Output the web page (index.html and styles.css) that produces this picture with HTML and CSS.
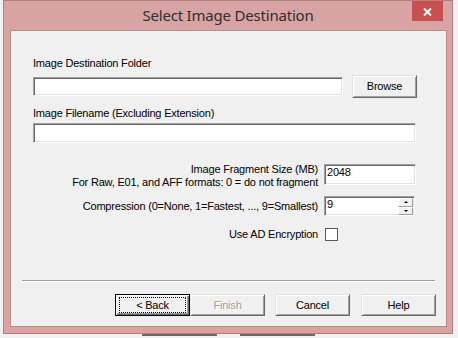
FILE: index.html
```html
<!DOCTYPE html>
<html>
<head>
<meta charset="utf-8">
<link rel="stylesheet" href="styles.css">
</head>
<body>
<div class="window">
  <div class="titlebar">
    <div class="title">Select Image Destination</div>
    <div class="close"><svg width="9" height="8" viewBox="0 0 9 8"><path d="M1 0.5 L8 7.5 M8 0.5 L1 7.5" stroke="#fff" stroke-width="2" fill="none"/></svg></div>
  </div>
  <div class="client">
    <div class="label l1">Image Destination Folder</div>
    <div class="row-folder">
      <div class="edit folder"></div>
      <div class="btn browse">Browse</div>
    </div>
    <div class="label l2">Image Filename (Excluding Extension)</div>
    <div class="edit filename"></div>
    <div class="opts">
      <div class="olabel frag">Image Fragment Size (MB)<br>For Raw, E01, and AFF formats: 0 = do not fragment</div>
      <div class="edit frag-edit">2048</div>
      <div class="olabel comp">Compression (0=None, 1=Fastest, ..., 9=Smallest)</div>
      <div class="edit spin"><span class="spinval">9</span><div class="spinbtns"><div class="sb up"><i></i></div><div class="sb down"><i></i></div></div></div>
      <div class="olabel enc">Use AD Encryption</div>
      <div class="checkcell"><div class="check"></div></div>
    </div>
    <div class="sep"></div>
    <div class="buttons">
      <div class="btn default"><span class="focus">&lt; Back</span></div>
      <div class="btn disabled">Finish</div>
      <div class="btn cancel">Cancel</div>
      <div class="btn help">Help</div>
    </div>
  </div>
</div>
<div class="under">
  <div class="seg s1"></div>
  <div class="seg s2"></div>
</div>
</body>
</html>
```
FILE: styles.css
```css
html, body {
  margin: 0;
  padding: 0;
}
body {
  background: #f0f0f0;
  width: 458px;
  height: 338px;
  overflow: hidden;
}
.window {
  box-sizing: border-box;
  margin-left: 3px;
  width: 450px;
  height: 334px;
  border: 1px solid #b07f7e;
  background: #d8a4a3;
  padding: 0 5px 6px 6px;
}
.titlebar {
  position: relative;
  height: 29px;
  box-sizing: border-box;
  padding-top: 4px;
}
.title {
  font-family: "Noto Sans", "Open Sans", sans-serif;
  font-size: 15px;
  line-height: 20px;
  letter-spacing: -0.2px;
  color: #2e2e2e;
  text-align: center;
  margin-left: -1px;
}
.close {
  position: absolute;
  top: 0;
  right: 4px;
  width: 31px;
  height: 20px;
  background: #c75050;
  display: flex;
  align-items: center;
  justify-content: center;
}
.close svg { display: block; margin-top: 1px; }
.client {
  box-sizing: border-box;
  width: 437px;
  height: 297px;
  border: 1px solid #bd8d8c;
  background: #f0f0f0;
  padding: 26px 0 0 22px;
  font-family: "Liberation Sans", Arial, sans-serif;
  font-size: 11px;
  line-height: 13px;
  letter-spacing: -0.2px;
  color: #000;
}
.label { height: 13px; white-space: nowrap; }
.l2 { margin-top: 9px; }
.row-folder {
  display: flex;
  margin-top: 5px;
  height: 23px;
}
.edit {
  box-sizing: border-box;
  background: #fff;
  border-top: 1px solid #a0a0a0;
  border-left: 1px solid #a0a0a0;
  border-bottom: 1px solid #fff;
  border-right: 1px solid #fff;
  box-shadow: inset 1px 1px 0 #696969, inset -1px -1px 0 #e3e3e3;
}
.folder {
  margin-top: 2px;
  width: 310px;
  height: 19px;
}
.btn {
  box-sizing: border-box;
  background: #f0f0f0;
  border: 1px solid;
  border-color: #e3e3e3 #696969 #696969 #e3e3e3;
  box-shadow: inset 1px 1px 0 #fff, inset -1px -1px 0 #a0a0a0;
  display: flex;
  align-items: center;
  justify-content: center;
  white-space: nowrap;
}
.browse {
  margin-left: 9px;
  width: 65px;
  height: 23px;
}
.filename {
  margin-top: 3px;
  width: 383px;
  height: 20px;
}
.opts {
  display: grid;
  grid-template-columns: 285px 92px;
  column-gap: 6px;
  margin-top: 20px;
}
.olabel {
  text-align: right;
  white-space: nowrap;
}
.frag-edit {
  margin-top: 1px;
  height: 21px;
  padding: 1px 0 0 2px;
}
.comp { margin-top: 11px; }
.spin {
  margin-top: 7px;
  width: 91px;
  height: 20px;
  display: flex;
  justify-content: space-between;
  padding: 1px 0 0 2px;
}
.spinbtns {
  width: 15px;
  height: 17px;
  margin-right: 1px;
  display: flex;
  flex-direction: column;
}
.sb {
  box-sizing: border-box;
  flex: 1;
  background: #f0f0f0;
  border: 1px solid;
  border-color: #fff #a0a0a0 #a0a0a0 #fff;
  display: flex;
  align-items: center;
  justify-content: center;
}
.sb i {
  display: block;
  width: 0;
  height: 0;
  border-left: 2px solid transparent;
  border-right: 2px solid transparent;
}
.up i { border-bottom: 2px solid #000; }
.down i { border-top: 2px solid #000; }
.enc { margin-top: 12px; }
.checkcell { margin-top: 12px; }
.check {
  box-sizing: border-box;
  margin-left: 1px;
  width: 13px;
  height: 13px;
  background: #fff;
  border: 1px solid #5a5a5a;
}
.sep {
  margin-top: 39px;
  margin-left: -11px;
  width: 413px;
  border-top: 1px solid #a0a0a0;
  border-bottom: 1px solid #fff;
}
.buttons {
  display: flex;
  margin-top: 12px;
  margin-left: 82px;
}
.buttons .btn {
  width: 75px;
  height: 22px;
}
.default {
  border: 1px solid #000;
  box-shadow: inset 1px 1px 0 #fff, inset -1px -1px 0 #696969, inset -2px -2px 0 #a0a0a0;
}
.focus {
  box-sizing: border-box;
  width: 67px;
  height: 16px;
  border: 1px dotted #000;
  display: flex;
  align-items: center;
  justify-content: center;
}
.disabled {
  color: #a0a0a0;
  text-shadow: 1px 1px 0 #fff;
}
.cancel { margin-left: 10px; }
.help { margin-left: 11px; }
.under {
  height: 4px;
  display: flex;
}
.seg {
  height: 2px;
  background: #6a6a6a;
}
.s1 { margin-left: 142px; width: 75px; }
.s2 { margin-left: 23px; width: 75px; }
```
